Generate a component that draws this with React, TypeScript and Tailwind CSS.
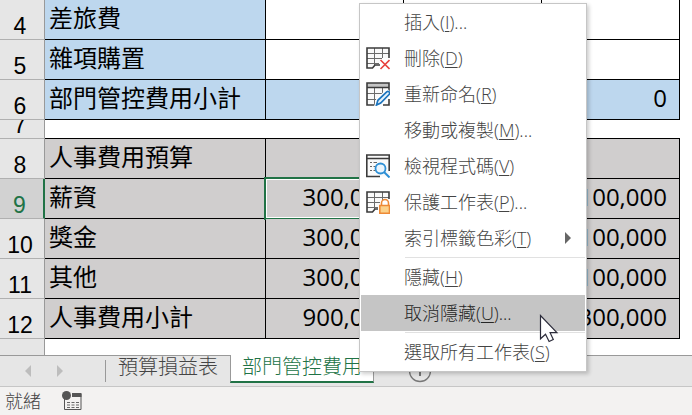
import { useState } from "react";
import type { ReactNode } from "react";
import clsx from "clsx";

type Row = {
  no: number;
  label?: string;
  values?: string[];
  tone: "plain" | "total" | "staff" | "gap";
};

type MenuEntry = {
  label: string;
  hotkey: string;
  more?: boolean;
  submenu?: boolean;
  divider?: boolean;
  icon?: ReactNode;
};

const rows: Row[] = [
  { no: 4, label: "差旅費", values: ["", "", ""], tone: "plain" },
  { no: 5, label: "雜項購置", values: ["", "", ""], tone: "plain" },
  { no: 6, label: "部門管控費用小計", values: ["", "", "0"], tone: "total" },
  { no: 7, tone: "gap" },
  { no: 8, label: "人事費用預算", values: ["", "", ""], tone: "staff" },
  { no: 9, label: "薪資", values: ["300,000", "", "100,000"], tone: "staff" },
  { no: 10, label: "獎金", values: ["300,000", "", "100,000"], tone: "staff" },
  { no: 11, label: "其他", values: ["300,000", "", "100,000"], tone: "staff" },
  { no: 12, label: "人事費用小計", values: ["900,000", "", "300,000"], tone: "staff" },
];

const activeRow = 9;

function DeleteIcon() {
  return (
    <svg width="24" height="24" viewBox="0 0 24 24" fill="none" aria-hidden="true">
      <path d="M1 2h22v10h-9v7H9l-2 3H1z" fill="#fafafa" />
      <path d="M8.500 2v18M16.500 2v10M1 7.500h22M1 12.500h15M1 17.500h12" stroke="#6b6b6b" />
      <path d="M23 12V2H1v20h5.500l2.500-3h5" stroke="#3b3b3b" strokeWidth="1.600" />
      <path d="M14.500 14l9 9M23.500 14l-9 9" stroke="#e8413c" strokeWidth="1.600" />
    </svg>
  );
}

function RenameIcon() {
  return (
    <svg width="24" height="24" viewBox="0 0 24 24" fill="none" aria-hidden="true">
      <path d="M1 1h22v22H1z" fill="#fafafa" />
      <path d="M1 1h22v4H1z" fill="#c4c4c4" />
      <path d="M8.500 5v18M16.500 5v8M1 11.500h18M1 17.500h11" stroke="#6b6b6b" />
      <path d="M23 9V1H1v22h9M23 17v6h-6M1 5.500h22" stroke="#3b3b3b" strokeWidth="1.600" />
      <path d="M10.500 23l1.500-5L21 9.200l2.500 2.500-9 9z" fill="#fff" stroke="#fff" strokeWidth="4" />
      <path d="M10.500 23l1.400-4.700 8.800-8.500q1.300-1 2.400 0t.2 2.500l-8.600 8.700z" fill="#e5f2fb" stroke="#1c74bd" strokeWidth="1.700" />
    </svg>
  );
}

function CodeIcon() {
  return (
    <svg width="24" height="24" viewBox="0 0 24 24" fill="none" aria-hidden="true">
      <path d="M.8 1h22.400v21.500H.8z" fill="#fafafa" />
      <path d="M14 22.500H.8V1h22.400v16M1 4.500h22" stroke="#3b3b3b" strokeWidth="1.600" />
      <path d="M4 8.500h2M7.500 8.500H11M4 12.500h2M7.500 12.500H9M4 16.500h2M7.500 16.500H9" stroke="#666" strokeWidth="1.200" />
      <circle cx="14.500" cy="14.500" r="5" fill="#eaf5fd" stroke="#2d8fd5" strokeWidth="1.800" />
      <path d="M18 18l5.500 5.500" stroke="#2d8fd5" strokeWidth="2" />
    </svg>
  );
}

function ProtectIcon() {
  return (
    <svg width="24" height="24" viewBox="0 0 24 24" fill="none" aria-hidden="true">
      <path d="M1 2h22v8h-9v8H9l-2.500 4H1z" fill="#fafafa" />
      <path d="M8.500 2v17M16.500 2v8M1 7.500h22M1 12.500h13M1 17.500h11" stroke="#6b6b6b" />
      <path d="M23 9V2H1v20h5.500l2.500-3h3" stroke="#3b3b3b" strokeWidth="1.600" />
      <path d="M15.500 15v-2a3.500 3.500 0 0 1 7 0v2" fill="#fff" stroke="#ee8a36" strokeWidth="1.600" />
      <path d="M13.800 15.500h9.700v7.700h-9.700z" fill="#fbd28b" stroke="#ee8a36" strokeWidth="1.600" />
    </svg>
  );
}

const menu: MenuEntry[] = [
  { label: "插入", hotkey: "I", more: true },
  { label: "刪除", hotkey: "D", icon: <DeleteIcon /> },
  { label: "重新命名", hotkey: "R", icon: <RenameIcon /> },
  { label: "移動或複製", hotkey: "M", more: true },
  { label: "檢視程式碼", hotkey: "V", icon: <CodeIcon /> },
  { label: "保護工作表", hotkey: "P", more: true, icon: <ProtectIcon /> },
  { label: "索引標籤色彩", hotkey: "T", submenu: true },
  { label: "隱藏", hotkey: "H", divider: true },
  { label: "取消隱藏", hotkey: "U", more: true },
  { label: "選取所有工作表", hotkey: "S", divider: true },
];

function SheetRow({ row }: { row: Row }) {
  const active = row.no === activeRow;

  return (
    <tr>
      <th
        scope="row"
        className={clsx(
          "border-b border-[#b0b0b0] p-0 font-normal",
          active ? "border-r-2 border-r-[#217346] bg-[#d2d2d2] text-[#217346]" : "border-r border-r-[#999] bg-[#e6e6e6]",
        )}
      >
        <div
          className={clsx(
            "flex items-end justify-center overflow-hidden pr-1 font-['Liberation_Sans',sans-serif] text-[23px] leading-[26px]",
            row.tone === "gap" ? "h-[18px]" : "h-[39px]",
          )}
        >
          {row.no}
        </div>
      </th>
      {row.tone === "gap" ? (
        <td colSpan={4} className="border-b border-black p-0" />
      ) : (
        <>
          <td
            className={clsx(
              "border-r border-b border-black p-0 pb-[3px] pl-1 leading-9",
              row.tone === "staff" ? "bg-[#d0cece]" : "bg-[#bdd7ee]",
            )}
          >
            {row.label}
          </td>
          {row.values?.map((value, i) => (
            <td
              key={i}
              className={clsx(
                "relative border-r border-b border-black p-0 pr-3 pb-[3px] text-right leading-9",
                row.tone === "staff" && "bg-[#d0cece]",
                row.tone === "total" && "bg-[#bdd7ee]",
              )}
            >
              {value}
              {active && i === 0 ? (
                <span className="absolute -inset-0.5 border-2 border-[#217346] shadow-[inset_0_0_0_1px_white]" />
              ) : null}
            </td>
          ))}
        </>
      )}
    </tr>
  );
}

function SheetMenu() {
  const [current, setCurrent] = useState("U");

  return (
    <div
      role="menu"
      className="absolute top-[3px] left-[359px] w-[228px] border border-[#c6c6c6] bg-white px-px pb-px text-lg font-light text-[#444] shadow-[2px_2px_4px_rgba(0,0,0,0.2)]"
    >
      {menu.map((entry) => (
        <div key={entry.hotkey}>
          {entry.divider ? <hr className="my-px ml-11 border-[#e1e1e1]" /> : null}
          <button
            type="button"
            role="menuitem"
            onMouseEnter={() => setCurrent(entry.hotkey)}
            className={clsx(
              "flex h-9 w-full items-center pl-[5px] text-left",
              current === entry.hotkey && "bg-[#c5c5c5] text-[#262626]",
            )}
          >
            <span className="w-[38px] shrink-0">{entry.icon}</span>
            <span className="flex-1 leading-6">
              {entry.label}(<u className="underline-offset-2">{entry.hotkey}</u>){entry.more ? "..." : ""}
            </span>
            {entry.submenu ? (
              <svg width="6" height="12" viewBox="0 0 6 12" className="mr-3.5" aria-hidden="true">
                <path d="M0 0l6 6-6 6z" fill="#666" />
              </svg>
            ) : null}
          </button>
        </div>
      ))}
    </div>
  );
}

export default function App() {
  return (
    <div className="relative flex min-h-screen flex-col overflow-hidden bg-white font-['Open_Sans','Noto_Sans_CJK_TC',sans-serif] text-black">
      <main className="flex flex-1 flex-col">
        <table className="w-[680px] table-fixed border-separate border-spacing-0 text-2xl">
          <colgroup>
            <col className="w-[45px]" />
            <col className="w-[221px]" />
            <col className="w-[138px]" />
            <col className="w-[138px]" />
            <col className="w-[138px]" />
          </colgroup>
          <tbody>
            {rows.map((row) => (
              <SheetRow key={row.no} row={row} />
            ))}
          </tbody>
        </table>
        <div className="min-h-4 w-[45px] flex-1 border-r border-[#999] bg-[#e6e6e6]" />
      </main>

      <nav className="flex h-8 items-start border-b border-[#c6c6c6] bg-[#e6e6e6] text-xl font-light">
        <div className="flex h-full w-[106px] items-center gap-[26px] border-t border-[#999] pl-[25px]">
          <button type="button" aria-label="上一張">
            <svg width="6" height="12" viewBox="0 0 6 12">
              <path d="M6 0L0 6l6 6z" fill="#bdbdbd" />
            </svg>
          </button>
          <button type="button" aria-label="下一張">
            <svg width="6" height="12" viewBox="0 0 6 12">
              <path d="M0 0l6 6-6 6z" fill="#bdbdbd" />
            </svg>
          </button>
          <span className="ml-auto h-[22px] w-px bg-[#999]" />
        </div>
        <button type="button" className="h-7 border-t border-[#999] px-3 leading-[22px] text-[#444]">
          <span className="block h-full">預算損益表</span>
        </button>
        <button
          type="button"
          className="h-7 border-x border-b-2 border-x-[#999] border-b-[#217346] bg-white px-[11px] leading-6 text-[#217346]"
        >
          <span className="block h-full">部門管控費用</span>
        </button>
        <div className="h-full flex-1 border-t border-[#999] pt-[3px] pl-[34px]">
          <button type="button" aria-label="新增工作表" className="block">
            <svg width="24" height="24" viewBox="0 0 24 24" fill="none" stroke="#777">
              <circle cx="12" cy="12" r="10.500" strokeWidth="1.300" />
              <path d="M12 7v10M7 12h10" strokeWidth="2" />
            </svg>
          </button>
        </div>
      </nav>

      <footer className="flex h-7 items-center gap-[21px] bg-[#f3f2f1] pl-[5px] text-lg font-light text-[#444]">
        <span className="leading-6">就緒</span>
        <button type="button" aria-label="錄製巨集">
          <svg width="20" height="20" viewBox="0 0 20 20" fill="none">
            <path d="M2.500 8v10.500h16.500V3" stroke="#555" />
            <path d="M10 2h9.500v4H10z" fill="#555" />
            <path d="M5 11.500h3M9.500 11.500h3M14 11.500h3M5 14h3M9.500 14h3M14 14h3M5 16.500h3M9.500 16.500h3M14 16.500h3" stroke="#666" />
            <circle cx="4.500" cy="4.500" r="4.500" fill="#555" />
          </svg>
        </button>
      </footer>

      <SheetMenu />

      <svg width="20" height="29" viewBox="0 0 20 29" className="pointer-events-none absolute top-[314px] left-[539px]" aria-hidden="true">
        <path d="M1.500 1.500v23.300l5-4.600 3.600 7.300 4.200-2-3.200-6.800h6.800z" fill="#fff" stroke="#2b2b3a" strokeWidth="1.200" />
      </svg>
    </div>
  );
}
